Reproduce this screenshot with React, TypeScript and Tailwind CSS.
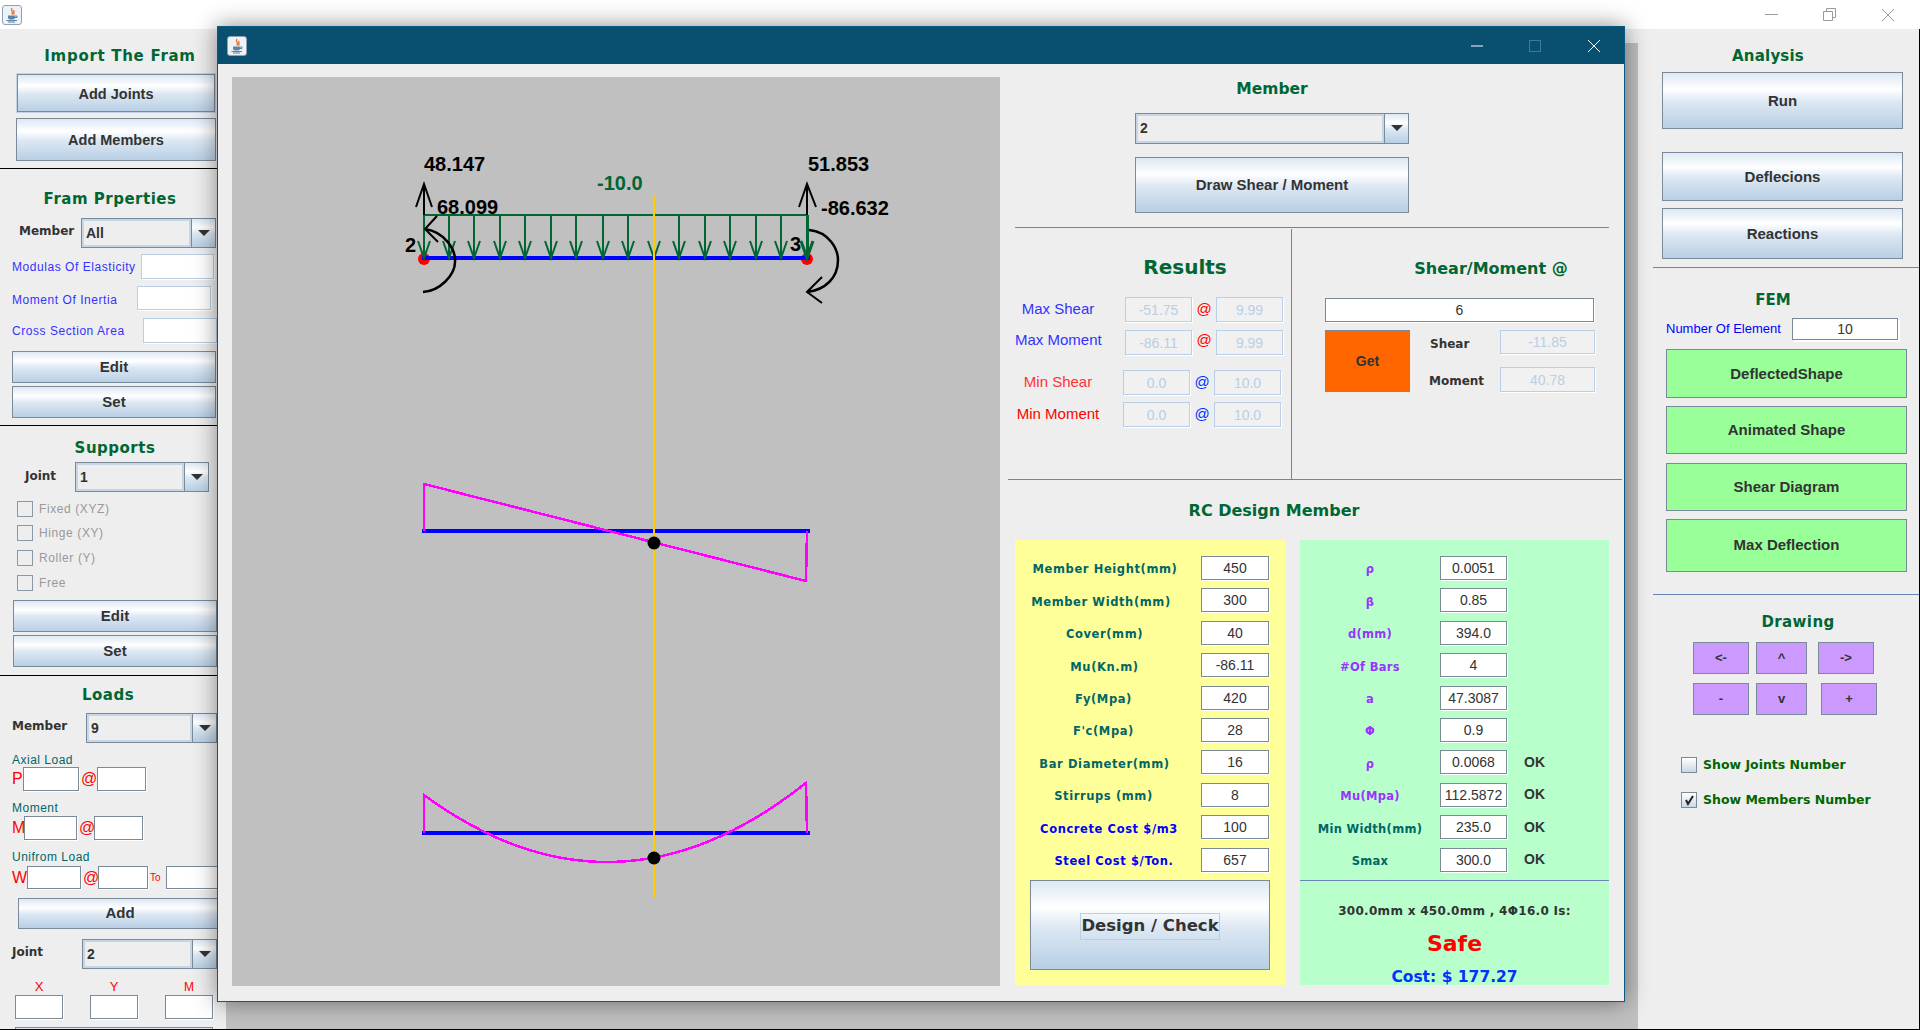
import type { ReactNode } from "react";

const SANS = "font-['Liberation_Sans',Arial,sans-serif]";
const TAHOMA = "font-['DejaVu_Sans',sans-serif]";
const OCEAN = "bg-[linear-gradient(180deg,#dde8f3_0%,#ffffff_30%,#dde8f3_52%,#b8cfe5_100%)]";

function Btn({ children, className = "" }: { children: ReactNode; className?: string }) {
  return (
    <button
      className={`flex items-center justify-center border border-[#7a8a99] ${SANS} font-bold text-[#333333] shrink-0 ${className}`}
    >
      {children}
    </button>
  );
}

function Field({ value = "", className = "" }: { value?: string; className?: string }) {
  return (
    <input
      readOnly
      value={value}
      className={`block shrink-0 min-w-0 text-center outline-none ${SANS} text-[14px] text-[#333333] bg-white border border-[#7a8a99] shadow-[1px_1px_0_#ffffff] ${className}`}
    />
  );
}

function Soft({ value = "", className = "" }: { value?: string; className?: string }) {
  return (
    <input
      readOnly
      value={value}
      className={`block shrink-0 min-w-0 text-center outline-none ${SANS} text-[14px] text-[#b8cfe5] bg-[#f1f1f1] border border-[#b8cfe5] shadow-[1px_1px_0_#ffffff] ${className}`}
    />
  );
}

function Combo({ value, className = "" }: { value: string; className?: string }) {
  return (
    <div className={`flex shrink-0 border border-[#7a8a99] bg-[#eeeeee] ${className}`}>
      <div className={`flex-1 flex items-center pl-[2px] border-2 border-[#c6d6e6] ${SANS} font-bold text-[14px] text-[#333333]`}>
        {value}
      </div>
      <div className={`w-[24px] flex items-center justify-center border-l border-[#7a8a99] ${OCEAN}`}>
        <svg width="12" height="7" viewBox="0 0 12 7">
          <polygon points="0,0 12,0 6,6" fill="#333333" />
        </svg>
      </div>
    </div>
  );
}

function Title({ children, className = "" }: { children: ReactNode; className?: string }) {
  return <div className={`${TAHOMA} font-bold text-[#006633] text-center whitespace-nowrap ${className}`}>{children}</div>;
}

function Check({ label, checked, disabled, className = "" }: { label: string; checked?: boolean; disabled?: boolean; className?: string }) {
  return (
    <div className={`flex items-center ${className}`}>
      <div
        className={`w-[16px] h-[16px] shrink-0 border flex items-center justify-center ${
          disabled ? "border-[#8b98a5]" : `border-[#7a8a99] bg-[linear-gradient(180deg,#ffffff,#c8d8e8)]`
        }`}
      >
        {checked && (
          <svg width="12" height="12" viewBox="0 0 12 12">
            <path d="M3 6 L5 10 L10 2" fill="none" stroke="#222222" strokeWidth="2" />
          </svg>
        )}
      </div>
      <span
        className={`ml-[6px] whitespace-nowrap ${
          disabled ? `${SANS} text-[12px] tracking-[0.6px] text-[#999999]` : `${TAHOMA} font-bold text-[12.5px] text-[#006600]`
        }`}
      >
        {label}
      </span>
    </div>
  );
}

function JavaIcon({ className = "" }: { className?: string }) {
  return (
    <svg className={className} width="20" height="20" viewBox="0 0 20 20">
      <rect x="0.5" y="0.5" width="19" height="19" rx="2.5" fill="#eef2f6" stroke="#8ea2b5" />
      <path d="M10 3 C8 6 12 6.5 10 9.5 M12 5 C11 7 13 7.5 11.5 9.5" fill="none" stroke="#e8762d" strokeWidth="1.4" />
      <path d="M6 10.5 H13 V12.5 C13 14 12 14.5 9.5 14.5 C7 14.5 6 14 6 12.5 Z" fill="#5b84a6" />
      <path d="M13 11 H15 V12.5 H13 M4.5 15.5 H15 M6 17 H13" fill="none" stroke="#5b84a6" strokeWidth="1" />
    </svg>
  );
}

function LoadLabel({ children, className = "" }: { children: ReactNode; className?: string }) {
  return <div className={`ml-[12px] h-[14px] leading-[14px] ${SANS} text-[12px] tracking-[0.5px] text-[#006666] ${className}`}>{children}</div>;
}

function Red({ children, className = "" }: { children: ReactNode; className?: string }) {
  return <span className={`${SANS} text-[#ff0000] text-[16px] leading-none ${className}`}>{children}</span>;
}

function BlueLabel({ children, className = "" }: { children: ReactNode; className?: string }) {
  return <span className={`${SANS} text-[12px] tracking-[0.55px] text-[#3333ff] whitespace-nowrap ${className}`}>{children}</span>;
}

function BoldLabel({ children, className = "" }: { children: ReactNode; className?: string }) {
  return <span className={`${TAHOMA} font-bold text-[12px] text-[#333333] whitespace-nowrap ${className}`}>{children}</span>;
}

function LeftPanel() {
  return (
    <div className="w-[226px] shrink-0 h-full bg-[#eeeeee] flex flex-col overflow-hidden [&>*]:shrink-0">
      <Title className="mt-[16px] h-[22px] leading-[22px] text-[15px] tracking-[0.7px] w-[240px]">Import The Fram</Title>
      <div className="mt-[6px] ml-[16px] w-[200px] h-[40px] p-[1px] bg-[#c3d3e3] flex">
        <Btn className={`flex-1 pt-[3px] text-[14.5px] ${OCEAN}`}>Add Joints</Btn>
      </div>
      <Btn className={`mt-[5px] ml-[16px] w-[200px] h-[43px] pt-[3px] text-[14.5px] ${OCEAN}`}>Add Members</Btn>
      <div className="mt-[7px] h-[1px] bg-black" />

      <Title className="mt-[19px] h-[22px] leading-[22px] text-[15px] tracking-[0.5px] w-[220px]">Fram Prperties</Title>
      <div className="mt-[8px] flex items-center h-[30px]">
        <BoldLabel className="ml-[19px] w-[62px] pb-[5px]">Member</BoldLabel>
        <Combo value="All" className="w-[135px] h-[30px]" />
      </div>
      <div className="mt-[6px] flex items-center h-[25px]">
        <BlueLabel className="ml-[12px] w-[129px]">Modulas Of Elasticity</BlueLabel>
        <Soft className="w-[73px] h-[25px] bg-white" />
      </div>
      <div className="mt-[7px] flex items-center h-[24px]">
        <BlueLabel className="ml-[12px] w-[125px] pt-[3px]">Moment Of Inertia</BlueLabel>
        <Soft className="w-[74px] h-[24px] bg-white" />
      </div>
      <div className="mt-[8px] flex items-center h-[25px]">
        <BlueLabel className="ml-[12px] w-[131px] pt-[1px]">Cross Section Area</BlueLabel>
        <Soft className="w-[74px] h-[25px] bg-white" />
      </div>
      <Btn className={`mt-[8px] ml-[12px] w-[204px] h-[32px] text-[15px] ${OCEAN}`}>Edit</Btn>
      <Btn className={`mt-[3px] ml-[12px] w-[204px] h-[32px] text-[15px] ${OCEAN}`}>Set</Btn>
      <div className="mt-[7px] h-[1px] bg-black" />

      <Title className="mt-[11px] h-[22px] leading-[22px] text-[15px] tracking-[0.5px] w-[230px]">Supports</Title>
      <div className="mt-[3px] flex items-center h-[30px]">
        <BoldLabel className="ml-[25px] w-[50px] pb-[2px]">Joint</BoldLabel>
        <Combo value="1" className="w-[134px] h-[30px]" />
      </div>
      <Check disabled label="Fixed (XYZ)" className="mt-[9px] ml-[17px] h-[16px]" />
      <Check disabled label="Hinge (XY)" className="mt-[8px] ml-[17px] h-[16px]" />
      <Check disabled label="Roller (Y)" className="mt-[9px] ml-[17px] h-[16px]" />
      <Check disabled label="Free" className="mt-[9px] ml-[17px] h-[16px]" />
      <Btn className={`mt-[9px] ml-[13px] w-[204px] h-[32px] text-[15px] ${OCEAN}`}>Edit</Btn>
      <Btn className={`mt-[3px] ml-[13px] w-[204px] h-[32px] text-[15px] ${OCEAN}`}>Set</Btn>
      <div className="mt-[8px] h-[1px] bg-black" />

      <Title className="mt-[8px] h-[22px] leading-[22px] text-[15px] tracking-[0.5px] w-[216px]">Loads</Title>
      <div className="mt-[7px] flex items-center h-[30px]">
        <BoldLabel className="ml-[12px] w-[74px] pb-[4px]">Member</BoldLabel>
        <Combo value="9" className="w-[131px] h-[30px]" />
      </div>
      <LoadLabel className="mt-[10px]">Axial Load</LoadLabel>
      <div className="mt-[0px] flex items-center h-[24px]">
        <Red className="ml-[12px] w-[11px]">P</Red>
        <Field className="w-[56px] h-[24px]" />
        <Red className="ml-[2px] w-[16px]">@</Red>
        <Field className="w-[49px] h-[24px]" />
      </div>
      <LoadLabel className="mt-[10px]">Moment</LoadLabel>
      <div className="mt-[1px] flex items-center h-[24px]">
        <Red className="ml-[12px] w-[12px]">M</Red>
        <Field className="w-[53px] h-[24px]" />
        <Red className="ml-[2px] w-[15px]">@</Red>
        <Field className="w-[49px] h-[24px]" />
      </div>
      <LoadLabel className="mt-[10px]">Unifrom Load</LoadLabel>
      <div className="mt-[2px] flex items-center h-[23px]">
        <Red className="ml-[12px] w-[16px]">W</Red>
        <Field className="w-[54px] h-[23px]" />
        <Red className="ml-[2px] w-[15px]">@</Red>
        <Field className="w-[50px] h-[23px]" />
        <span className={`${SANS} ml-[2px] w-[17px] text-[10px] text-[#ff0000]`}>To</span>
        <Field className="w-[60px] h-[23px]" />
      </div>
      <Btn className={`mt-[9px] ml-[18px] w-[204px] h-[31px] text-[15px] ${OCEAN}`}>Add</Btn>
      <div className="mt-[10px] flex items-center h-[30px]">
        <BoldLabel className="ml-[12px] w-[70px] pb-[5px]">Joint</BoldLabel>
        <Combo value="2" className="w-[135px] h-[30px]" />
      </div>
      <div className={`mt-[9px] flex h-[17px] items-center ${SANS} text-[#ff0000]`}>
        <span className="ml-[15px] w-[48px] text-center text-[13px]">X</span>
        <span className="ml-[27px] w-[48px] text-center text-[13px]">Y</span>
        <span className="ml-[27px] w-[48px] text-center text-[12px]">M</span>
      </div>
      <div className="flex">
        <Field className="ml-[15px] w-[48px] h-[24px]" />
        <Field className="ml-[27px] w-[48px] h-[24px]" />
        <Field className="ml-[27px] w-[48px] h-[24px]" />
      </div>
      <div className={`mt-[8px] ml-[15px] w-[198px] h-[30px] border border-[#7a8a99] ${OCEAN}`} />
    </div>
  );
}

function RightPanel() {
  return (
    <div className="w-[282px] shrink-0 h-full bg-[#eeeeee] border-r border-black flex flex-col">
      <Title className="mt-[16px] h-[22px] leading-[22px] text-[15px] tracking-[0.2px] w-[260px]">Analysis</Title>
      <Btn className={`mt-[5px] ml-[24px] w-[241px] h-[57px] pt-[2px] text-[15px] ${OCEAN}`}>Run</Btn>
      <Btn className={`mt-[23px] ml-[24px] w-[241px] h-[49px] pt-[2px] text-[15px] ${OCEAN}`}>Deflecions</Btn>
      <Btn className={`mt-[7px] ml-[24px] w-[241px] h-[51px] pt-[2px] text-[15px] ${OCEAN}`}>Reactions</Btn>
      <div className="mt-[8px] ml-[15px] h-[1px] bg-[#6b84b8]" />

      <Title className="mt-[21px] h-[22px] leading-[22px] text-[15px] w-[270px]">FEM</Title>
      <div className="mt-[7px] flex items-center h-[22px]">
        <span className={`ml-[28px] w-[126px] ${SANS} text-[13px] text-[#0000ff] whitespace-nowrap`}>Number Of Element</span>
        <Field value="10" className="w-[106px] h-[22px] shadow-[2px_2px_0_#ffffff]" />
      </div>
      <Btn className="mt-[9px] ml-[28px] w-[241px] h-[49px] pt-[1px] text-[15px] bg-[#99ff99]">DeflectedShape</Btn>
      <Btn className="mt-[8px] ml-[28px] w-[241px] h-[48px] pt-[1px] text-[15px] bg-[#99ff99]">Animated Shape</Btn>
      <Btn className="mt-[9px] ml-[28px] w-[241px] h-[48px] text-[15px] bg-[#99ff99]">Shear Diagram</Btn>
      <Btn className="mt-[8px] ml-[28px] w-[241px] h-[53px] text-[15px] bg-[#99ff99]">Max Deflection</Btn>
      <div className="mt-[22px] ml-[15px] h-[1px] bg-[#6b84b8]" />

      <Title className="mt-[16px] h-[22px] leading-[22px] text-[15px] tracking-[0.4px] w-[320px]">Drawing</Title>
      <div className="mt-[9px] flex">
        <Btn className="ml-[55px] w-[56px] h-[32px] text-[13px] bg-[#cc99ff]">&lt;-</Btn>
        <Btn className="ml-[7px] w-[51px] h-[32px] text-[13px] bg-[#cc99ff]">^</Btn>
        <Btn className="ml-[11px] w-[56px] h-[32px] text-[13px] bg-[#cc99ff]">-&gt;</Btn>
      </div>
      <div className="mt-[9px] flex">
        <Btn className="ml-[55px] w-[56px] h-[32px] text-[13px] bg-[#cc99ff]">-</Btn>
        <Btn className="ml-[7px] w-[51px] h-[32px] text-[13px] bg-[#cc99ff]">v</Btn>
        <Btn className="ml-[14px] w-[56px] h-[32px] text-[13px] bg-[#cc99ff]">+</Btn>
      </div>
      <Check label="Show Joints Number" className="mt-[42px] ml-[43px] h-[16px]" />
      <Check checked label="Show Members Number" className="mt-[19px] ml-[43px] h-[16px]" />
    </div>
  );
}

const ARROWS = [424, 449, 474, 500, 525, 551, 576, 603, 628, 654, 679, 705, 730, 756, 781, 807];
const parabola = Array.from({ length: 39 }, (_, i) => {
  const x = 424 + i * 10 + (i === 38 ? 2 : 0);
  return `${x},${(862 - 0.002 * (x - 607) * (x - 607)).toFixed(1)}`;
}).join(" ");

function BeamDrawing() {
  return (
    <svg className="block w-[768px] h-[909px] shrink-0 bg-[#c0c0c0]" viewBox="232 77 768 909" fontFamily="Liberation Sans, Arial, sans-serif" fontWeight="bold" fontSize="20">
      {/* joints */}
      <circle cx="424" cy="259" r="6" fill="#ff0000" />
      <circle cx="807" cy="259" r="6" fill="#ff0000" />

      {/* loads */}
      <line x1="422" y1="257.5" x2="810" y2="257.5" stroke="#0000ff" strokeWidth="4" shapeRendering="crispEdges" />
      <line x1="424" y1="215" x2="807" y2="215" stroke="#006633" strokeWidth="2" shapeRendering="crispEdges" />
      {ARROWS.map((x) => (
        <g key={x} stroke="#006633" strokeWidth={x === 807 ? 3 : 2} fill="none">
          <line x1={x} y1="215" x2={x} y2="258" shapeRendering="crispEdges" />
          <path d={`M${x - 6} 241 L${x} 258 L${x + 6} 241`} />
        </g>
      ))}

      {/* reactions */}
      <g stroke="#000000" strokeWidth="2" fill="none">
        <path d="M424 215 V184 M416 207 L424 184 L432 207" />
        <path d="M807 215 V184 M799 207 L807 184 L816 207" />
        <path strokeWidth="2.5" d="M425 229 C445 232 456 250 455 262 C455 275 440 291 423 292" />
        <path d="M437 216 L425 229 L438 242" />
        <path strokeWidth="2.5" d="M809 230 C830 232 838 250 838 260 C838 278 825 290 807 292" />
        <path d="M822 277 L807 292 L822 303" />
      </g>
      <text x="424" y="171">48.147</text>
      <text x="808" y="171">51.853</text>
      <text x="597" y="190" fill="#006633">-10.0</text>
      <text x="437" y="214">68.099</text>
      <text x="821" y="215">-86.632</text>
      <text x="405" y="252">2</text>
      <text x="790" y="251">3</text>

      {/* shear */}
      <line x1="422" y1="531" x2="810" y2="531" stroke="#0000ff" strokeWidth="4" shapeRendering="crispEdges" />
      <polyline points="424,531 424,484 806,581 807,531" fill="none" stroke="#ff00ff" strokeWidth="2.5" shapeRendering="crispEdges" />

      {/* moment */}
      <line x1="422" y1="833" x2="810" y2="833" stroke="#0000ff" strokeWidth="4" shapeRendering="crispEdges" />
      <polyline points={`424,833 ${parabola} 807,833`} fill="none" stroke="#ff00ff" strokeWidth="2.5" shapeRendering="crispEdges" />

      <line x1="654" y1="195" x2="654" y2="897" stroke="#ffcc00" strokeWidth="2" shapeRendering="crispEdges" />
      <circle cx="654" cy="543" r="6.5" fill="#000000" />
      <circle cx="654" cy="858" r="6.5" fill="#000000" />
    </svg>
  );
}

const DESIGN_ROWS: [string, string, string][] = [
  ["Member Height(mm)", "450", "text-[#006666] pr-[6px]"],
  ["Member Width(mm)", "300", "text-[#006666] pr-[14px]"],
  ["Cover(mm)", "40", "text-[#006666] pr-[7px]"],
  ["Mu(Kn.m)", "-86.11", "text-[#006666] pr-[7px]"],
  ["Fy(Mpa)", "420", "text-[#006666] pr-[9px]"],
  ["F'c(Mpa)", "28", "text-[#006666] pr-[9px]"],
  ["Bar Diameter(mm)", "16", "text-[#006666] pr-[7px]"],
  ["Stirrups (mm)", "8", "text-[#006666] pr-[9px]"],
  ["Concrete Cost $/m3", "100", "text-[#0000ff] pl-[2px]"],
  ["Steel Cost $/Ton.", "657", "text-[#0000ff] pl-[12px]"],
];

const CHECK_ROWS: [string, string, string, string][] = [
  ["ρ", "0.0051", "", "text-[#9933ff]"],
  ["β", "0.85", "", "text-[#9933ff]"],
  ["d(mm)", "394.0", "", "text-[#9933ff]"],
  ["#Of Bars", "4", "", "text-[#9933ff]"],
  ["a", "47.3087", "", "text-[#9933ff]"],
  ["Φ", "0.9", "", "text-[#9933ff]"],
  ["ρ", "0.0068", "OK", "text-[#9933ff]"],
  ["Mu(Mpa)", "112.5872", "OK", "text-[#9933ff]"],
  ["Min Width(mm)", "235.0", "OK", "text-[#006666]"],
  ["Smax", "300.0", "OK", "text-[#006666]"],
];

function ResultRow({ label, labelCls, v1, v2, atCls }: { label: string; labelCls: string; v1: string; v2: string; atCls: string }) {
  return (
    <div className="flex items-center h-[25px]">
      <span className={`${SANS} text-[15px] whitespace-nowrap text-center w-[110px] ${labelCls}`}>{label}</span>
      <Soft value={v1} className="w-[67px] h-[25px]" />
      <span className={`${SANS} text-[15px] w-[24px] text-center ${atCls}`}>@</span>
      <Soft value={v2} className="w-[67px] h-[25px]" />
    </div>
  );
}

function MemberColumn() {
  return (
    <div className="w-[622px] shrink-0 flex flex-col">
      <Title className="mt-[14px] h-[22px] leading-[22px] text-[15.5px] text-[#006600] w-[544px]">Member</Title>
      <Combo value="2" className="mt-[13px] ml-[135px] w-[274px] h-[31px]" />
      <Btn className={`mt-[13px] ml-[135px] w-[274px] h-[56px] text-[15px] ${OCEAN}`}>Draw Shear / Moment</Btn>
      <div className="mt-[14px] ml-[15px] w-[594px] h-[2px] border-t border-[#6b84b8] border-b-white" />

      <div className="flex h-[250px]">
        <div className="w-[292px] border-r border-[#6b84b8] flex flex-col pl-[15px]">
          <Title className="mt-[25px] h-[26px] leading-[26px] text-[20px] text-[#006600] w-[340px]">Results</Title>
          <div className="mt-[17px]"><ResultRow label="Max Shear" labelCls="text-[#3333ff] pr-[24px]" v1="-51.75" v2="9.99" atCls="text-[#ff0000]" /></div>
          <div className="mt-[8px]"><ResultRow label="Max Moment" labelCls="text-[#3333ff] pr-[24px] pb-[5px]" v1="-86.11" v2="9.99" atCls="text-[#ff0000] pb-[5px]" /></div>
          <div className="mt-[15px] -ml-[2px]"><ResultRow label="Min Shear" labelCls="text-[#ff3333] pr-[20px]" v1="0.0" v2="10.0" atCls="text-[#0033ff]" /></div>
          <div className="mt-[7px] -ml-[2px]"><ResultRow label="Min Moment" labelCls="text-[#ff0000] pr-[20px]" v1="0.0" v2="10.0" atCls="text-[#0033ff]" /></div>
        </div>
        <div className="flex-1 flex flex-col pl-[33px]">
          <Title className="mt-[29px] h-[22px] leading-[22px] text-[16px] text-[#006600] w-[332px]">Shear/Moment @</Title>
          <Field value="6" className="mt-[18px] w-[269px] h-[24px]" />
          <div className="mt-[8px] flex">
            <Btn className="w-[85px] h-[62px] text-[14px] bg-[#ff6600]">Get</Btn>
            <div className="flex flex-col">
              <div className="flex items-center h-[24px]">
                <BoldLabel className="ml-[20px] w-[70px] pt-[4px]">Shear</BoldLabel>
                <Soft value="-11.85" className="w-[95px] h-[24px]" />
              </div>
              <div className="mt-[13px] flex items-center h-[25px]">
                <BoldLabel className="ml-[19px] w-[71px] pt-[2px]">Moment</BoldLabel>
                <Soft value="40.78" className="w-[95px] h-[25px]" />
              </div>
            </div>
          </div>
        </div>
      </div>
      <div className="ml-[8px] h-[2px] border-t border-[#6b84b8]" />

      <Title className="mt-[19px] h-[22px] leading-[22px] text-[16px] text-[#006600] w-[548px]">RC Design Member</Title>
      <div className="mt-[18px] ml-[15px] flex h-[445px]">
        <div className="w-[270px] bg-[#ffff99] flex flex-col [&>*]:shrink-0">
          <div className="mt-[16px] flex flex-col gap-[8.4px]">
            {DESIGN_ROWS.map(([label, value, color]) => (
              <div key={label} className="flex items-center h-[24px]">
                <span className={`${TAHOMA} font-bold text-[11.5px] tracking-[0.6px] pt-[4px] w-[186px] text-center whitespace-nowrap ${color}`}>{label}</span>
                <Field value={value} className="w-[68px] h-[24px]" />
              </div>
            ))}
          </div>
          <div className={`mt-[8px] ml-[15px] w-[240px] h-[90px] border border-[#7a8a99] flex items-center justify-center ${OCEAN}`}>
            <span className={`${TAHOMA} font-bold text-[16.5px] mt-[4px] text-[#333333] border border-[#b8cfe5] whitespace-nowrap`}>Design / Check</span>
          </div>
        </div>
        <div className="ml-[15px] w-[309px] bg-[#b9ffcb] flex flex-col [&>*]:shrink-0">
          <div className="mt-[16px] flex flex-col gap-[8.4px]">
            {CHECK_ROWS.map(([label, value, ok, color], i) => (
              <div key={i} className="flex items-center h-[24px]">
                <span className={`${TAHOMA} font-bold text-[11.5px] tracking-[0.3px] pt-[4px] w-[140px] text-center whitespace-nowrap ${color}`}>{label}</span>
                <Field value={value} className="w-[67px] h-[24px]" />
                <span className={`${SANS} font-bold text-[14px] ml-[17px] text-[#333333]`}>{ok}</span>
              </div>
            ))}
          </div>
          <div className="mt-[8px] h-[1px] bg-[#6b84b8]" />
          <div className={`mt-[21px] ${TAHOMA} font-bold text-[12px] tracking-[0.3px] text-[#333333] text-center whitespace-nowrap`}>300.0mm x 450.0mm , 4Φ16.0 Is:</div>
          <div className={`mt-[9px] h-[30px] leading-[30px] ${TAHOMA} font-bold text-[22px] text-[#ff0000] text-center`}>Safe</div>
          <div className={`mt-[7px] ${TAHOMA} font-bold text-[15.5px] text-[#0033ff] text-center whitespace-nowrap`}>Cost: $ 177.27</div>
        </div>
      </div>
    </div>
  );
}

function Dialog() {
  return (
    <div className="absolute left-[217px] top-[26px] w-[1408px] h-[976px] border border-[#0a5a7d] bg-[#eeeeee] shadow-[0_0_22px_rgba(0,0,0,0.45)] flex flex-col">
      <div className="h-[37px] shrink-0 bg-[#084f70] flex items-center">
        <JavaIcon className="ml-[9px]" />
        <svg className="ml-auto mr-[23px]" width="130" height="14" viewBox="0 0 130 14">
          <line x1="0" y1="7" x2="12" y2="7" stroke="#ffffff" strokeWidth="1" />
          <rect x="58.5" y="1.5" width="11" height="11" fill="none" stroke="#3f7a97" />
          <path d="M117 1 L129 13 M129 1 L117 13" stroke="#ffffff" strokeWidth="1" />
        </svg>
      </div>
      <div className="flex flex-1 min-h-0 pl-[14px] pt-[13px]">
        <BeamDrawing />
        <div className="-mt-[13px]">
          <MemberColumn />
        </div>
      </div>
    </div>
  );
}

export default function App() {
  return (
    <div className="relative w-[1920px] h-[1030px] overflow-hidden bg-white flex flex-col">
      <div className="h-[29px] shrink-0 bg-white flex items-center">
        <JavaIcon className="ml-[2px]" />
        <svg className="ml-auto mr-[25px]" width="130" height="14" viewBox="0 0 130 14">
          <line x1="0" y1="6.5" x2="13" y2="6.5" stroke="#9a9a9a" strokeWidth="1" />
          <path d="M58.5 3.5 H67.5 V12.5 H58.5 Z M61.5 3 V0.5 H70.5 V9.5 H68" fill="none" stroke="#9a9a9a" />
          <path d="M117 1 L129 13 M129 1 L117 13" stroke="#9a9a9a" strokeWidth="1" />
        </svg>
      </div>
      <div className="flex flex-1 min-h-0 border-b border-black">
        <LeftPanel />
        <div className="flex-1 flex flex-col bg-[#eeeeee]">
          <div className="mt-[14px] flex-1 bg-[#c0c0c0]" />
        </div>
        <RightPanel />
      </div>
      <Dialog />
    </div>
  );
}
